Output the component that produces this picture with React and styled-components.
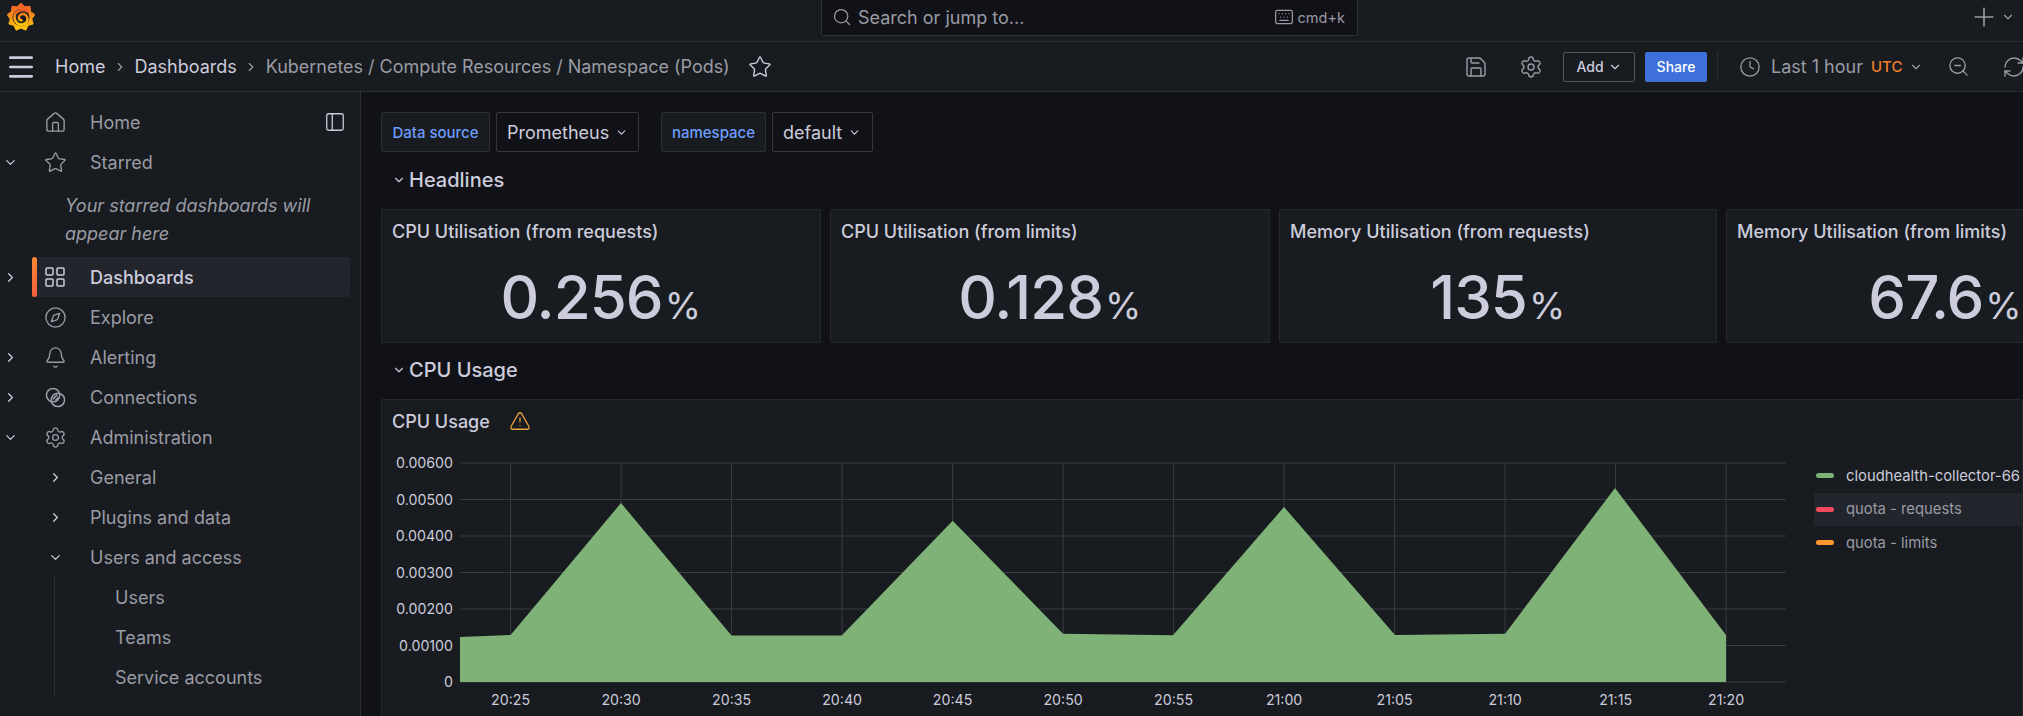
import React from 'react';
import styled, { createGlobalStyle } from 'styled-components';
import {
  Bell, ChevronDown, ChevronRight, Clock, Compass, House, Keyboard, LayoutGrid, Menu, PanelLeft,
  Plus, RefreshCw, Save, Search, Settings, Star, TriangleAlert, ZoomOut,
} from 'lucide-react';

const GlobalStyle = createGlobalStyle`
  html, body {
    margin: 0;
    height: 716px;
    overflow: hidden;
    background: #111217;
    color: #ccccdc;
    font-family: Inter, "Liberation Sans", sans-serif;
  }
  * { box-sizing: border-box; }
`;

const Page = styled.div`
  width: 2023px;
  height: 716px;
  display: flex;
  flex-direction: column;
  overflow: hidden;
`;

const TopBar = styled.header`
  height: 42px;
  flex: none;
  display: grid;
  grid-template-columns: 821px 537px 1fr;
  background: #181b1f;
  border-bottom: 1px solid #2c2e33;
`;

const LogoCell = styled.div`
  padding: 2px 0 0 7px;
`;

const SearchBox = styled.div`
  height: 38px;
  margin-top: -2px;
  display: flex;
  align-items: center;
  gap: 6px;
  padding: 0 12px 0 10px;
  background: #111217;
  border: 1px solid #2f3136;
  border-radius: 2px;
  color: #9a9ba5;
  font-size: 18px;
`;

const Shortcut = styled.span`
  margin-left: auto;
  display: flex;
  align-items: center;
  gap: 4px;
  font-size: 14.5px;
`;

const TopRight = styled.div`
  display: flex;
  align-items: center;
  justify-content: flex-end;
  gap: 2px;
  padding: 0 8px 7px 0;
  color: #9a9ba5;
`;

const NavBar = styled.div`
  height: 50px;
  flex: none;
  display: flex;
  align-items: center;
  padding-left: 5px;
  background: #181b1f;
  border-bottom: 1px solid #2c2e33;
`;

const Crumb = styled.span`
  font-size: 18px;
  white-space: nowrap;
  letter-spacing: ${(p) => (p.$muted ? '-0.03px' : '0')};
  color: ${(p) => (p.$muted ? '#9a9ba5' : '#ccccdc')};
`;

const CrumbSep = styled(ChevronRight)`
  margin: 0 7.5px;
  color: #9a9ba5;
  flex: none;
`;

const NavTools = styled.div`
  margin-left: auto;
  display: flex;
  align-items: center;
  color: #9a9ba5;
  width: 559px;
  flex: none;
  white-space: nowrap;
  svg { flex: none; }
`;

const ToolIcon = styled.span`
  display: flex;
  flex: none;
  margin-right: ${(p) => p.$gap}px;
`;

const Button = styled.div`
  height: 30px;
  display: flex;
  flex: none;
  align-items: center;
  justify-content: center;
  gap: 4px;
  width: ${(p) => p.$width}px;
  margin-right: ${(p) => p.$gap}px;
  font-size: 14px;
  font-weight: 500;
  border-radius: 2px;
  color: ${(p) => (p.$primary ? '#ffffff' : '#ccccdc')};
  background: ${(p) => (p.$primary ? '#3d71d9' : 'transparent')};
  border: ${(p) => (p.$primary ? 'none' : '1px solid #54565c')};
`;

const Divider = styled.span`
  width: 1px;
  height: 30px;
  flex: none;
  background: #2c2e33;
  margin-right: 21px;
`;

const TimeText = styled.span`
  font-size: 18px;
  margin: 0 8px 0 10px;
`;

const Utc = styled.span`
  font-size: 15px;
  font-weight: 500;
  color: #f0802a;
  margin-right: 7px;
`;

const Body = styled.div`
  flex: 1;
  min-height: 0;
  display: flex;
`;

const Sidebar = styled.nav`
  width: 361px;
  flex: none;
  background: #181b1f;
  border-right: 1px solid #2c2e33;
  padding-top: 10px;
  display: flex;
  flex-direction: column;
`;

const NavRow = styled.div`
  position: relative;
  height: 40px;
  flex: none;
  width: 350px;
  display: grid;
  grid-template-columns: 20px 70px 1fr;
  align-items: center;
  font-size: 18px;
  color: ${(p) => (p.$active ? '#ccccdc' : '#9a9ba5')};
  font-weight: ${(p) => (p.$active ? 500 : 400)};
  background: ${(p) => (p.$active ? 'linear-gradient(90deg, transparent 32px, #22252b 32px)' : 'transparent')};
  border-radius: 2px;
`;

const ActiveMark = styled.span`
  position: absolute;
  left: 32px;
  top: 0;
  width: 5px;
  height: 100%;
  border-radius: 3px;
  background: linear-gradient(0deg, #f55f3e, #ff8833);
`;

const Caret = styled.span`
  display: flex;
  justify-content: center;
  color: #ccccdc;
`;

const IconSlot = styled.span`
  display: flex;
  justify-content: center;
  color: #9a9ba5;
  width: 70px;
`;

const DockButton = styled.span`
  position: absolute;
  right: 4px;
  top: 9px;
  display: flex;
  color: #ccccdc;
`;

const EmptyNote = styled.div`
  height: 75px;
  flex: none;
  padding: 10px 0 0 65px;
  font-size: 18px;
  font-style: italic;
  line-height: 28px;
  color: #9a9ba5;
`;

const SubTree = styled.div`
  margin-left: 54px;
  border-left: 1px solid #2c2e33;
  height: 120px;
  flex: none;
`;

const SubRow = styled.div`
  height: 40px;
  display: flex;
  align-items: center;
  padding-left: 60px;
  font-size: 18px;
  color: #9a9ba5;
`;

const Main = styled.main`
  flex: 1;
  min-width: 0;
  padding: 20px 0 0 20px;
  overflow: hidden;
`;

const VarRow = styled.div`
  display: flex;
  height: 40px;
`;

const VarLabel = styled.div`
  height: 40px;
  display: flex;
  align-items: center;
  justify-content: center;
  width: ${(p) => p.$width}px;
  margin-right: 6px;
  background: #181b1f;
  border: 1px solid #2c2e33;
  border-radius: 2px;
  color: #6e9fff;
  font-size: 15px;
  font-weight: 500;
`;

const VarSelect = styled.div`
  height: 40px;
  display: flex;
  align-items: center;
  gap: 6px;
  width: ${(p) => p.$width}px;
  margin-right: ${(p) => p.$gap}px;
  padding-left: 10px;
  background: #111217;
  border: 1px solid #34363c;
  border-radius: 2px;
  font-size: 18px;
`;

const RowTitle = styled.div`
  height: ${(p) => p.$height}px;
  display: flex;
  align-items: center;
  padding: 0 0 2px 11px;
  gap: 3px;
  font-size: 20px;
  font-weight: 500;
`;

const StatGrid = styled.div`
  display: grid;
  grid-template-columns: 439.5px 439.5px 437.5px 438px;
  column-gap: 9.5px;
`;

const Panel = styled.section`
  position: relative;
  background: #181b1f;
  border: 1px solid #26282d;
  border-radius: 2px;
`;

const PanelTitle = styled.div`
  height: 42px;
  display: flex;
  align-items: center;
  gap: 19px;
  padding-left: 10px;
  font-size: 18px;
  font-weight: 500;
  white-space: nowrap;
`;

const StatValue = styled.div`
  height: 90px;
  display: flex;
  align-items: baseline;
  justify-content: center;
  gap: 2px;
  padding-top: 9px;
  font-size: 60px;
  font-weight: 500;
  letter-spacing: -1px;
  line-height: 72px;
`;

const StatUnit = styled.span`
  font-size: 37px;
  font-weight: 400;
  letter-spacing: 0;
`;

const ChartPanel = styled(Panel)`
  height: 330px;
`;

const ChartBody = styled.div`
  display: flex;
`;

const Legend = styled.div`
  position: absolute;
  left: 1432px;
  top: 59px;
  width: 300px;
  overflow: hidden;
`;

const LegendRow = styled.div`
  height: 33.5px;
  display: flex;
  align-items: center;
  gap: 12px;
  padding-left: 2px;
  font-size: 14.8px;
  white-space: nowrap;
  color: ${(p) => (p.$bright ? '#ccccdc' : '#9a9ba5')};
  background: ${(p) => (p.$hover ? '#22252b' : 'transparent')};
`;

const Swatch = styled.span`
  width: 18px;
  height: 5px;
  border-radius: 3px;
  flex: none;
  background: ${(p) => p.$color};
`;

// cog outline for the logo, teeth taken round the circle
const cogPoints = () => {
  const pts = [];
  const teeth = 9;
  for (let i = 0; i < teeth * 2; i++) {
    const r = i % 2 === 0 ? 14 : 11;
    const a = (Math.PI * i) / teeth - Math.PI / 2;
    pts.push(`${(14 + r * Math.cos(a)).toFixed(1)},${(15 + r * Math.sin(a)).toFixed(1)}`);
  }
  return pts.join(' ');
};

const GrafanaLogo = () => (
  <svg width="28" height="30" viewBox="0 0 28 30">
    <defs>
      <linearGradient id="gf" x1="0" y1="1" x2="0" y2="0">
        <stop offset="0" stopColor="#fbca0a" />
        <stop offset="1" stopColor="#f05a28" />
      </linearGradient>
    </defs>
    <polygon points={cogPoints()} fill="url(#gf)" stroke="url(#gf)" strokeWidth="1" strokeLinejoin="round" />
    <circle cx="14" cy="15.500" r="8.500" fill="#181b1f" />
    <path
      fill="none"
      stroke="url(#gf)"
      strokeWidth="2.600"
      d="M22 10C17 6 7 8 7.500 16 8 21 12 23 15 22.500 19 22 21 19.500 20.500 16.500 20 13 17.500 11.500 15 12 13 12.500 11.500 14.500 12 16.500 12.500 18 14 18.500 15.500 18"
    />
  </svg>
);

const ConnectionsIcon = () => (
  <svg width="21" height="21" viewBox="0 0 22 22" fill="none" stroke="currentColor" strokeWidth="1.600">
    <circle cx="8.500" cy="8.500" r="7" />
    <circle cx="13.500" cy="13.500" r="7" />
    <path d="M8 13l5-5M11 14l3-3" />
  </svg>
);

const series = [
  [0, 174], [50.600, 172], [161, 40], [271.500, 172.500], [381.700, 172.500], [492.700, 57.700],
  [603, 170.700], [713, 172.300], [824, 44], [935, 172], [1045, 170.700], [1155, 25], [1266, 172],
];
const yTicks = ['0.00600', '0.00500', '0.00400', '0.00300', '0.00200', '0.00100', '0'];
const xTicks = ['20:25', '20:30', '20:35', '20:40', '20:45', '20:50', '20:55', '21:00', '21:05', '21:10', '21:15', '21:20'];

const UsageChart = () => {
  const left = 78;
  const top = 21;
  const plotH = 219;
  const plotW = 1326;
  const area = series.map(([x, y]) => `${x + left},${y + top}`).join(' ');
  return (
    <svg width="1420" height="285" style={{ display: 'block' }}>
      {yTicks.map((t, i) => {
        const y = top + (plotH / 6) * i;
        return (
          <g key={t}>
            <line x1={left} x2={left + plotW} y1={y} y2={y} stroke="#3b3d42" />
            <text x={left - 7} y={y + 5} textAnchor="end" fontSize="14.200" fill="#ccccdc">{t}</text>
          </g>
        );
      })}
      {xTicks.map((t, i) => {
        const x = left + 50.600 + 110.500 * i;
        return (
          <g key={t}>
            <line x1={x} x2={x} y1={top} y2={top + plotH} stroke="#3b3d42" />
            <text x={x} y={top + plotH + 23} textAnchor="middle" fontSize="14.200" fill="#ccccdc">{t}</text>
          </g>
        );
      })}
      <polygon points={`${left},${top + plotH} ${area} ${left + 1266},${top + plotH}`} fill="#7eb276" />
    </svg>
  );
};

const stats = [
  { title: 'CPU Utilisation (from requests)', value: '0.256' },
  { title: 'CPU Utilisation (from limits)', value: '0.128' },
  { title: 'Memory Utilisation (from requests)', value: '135' },
  { title: 'Memory Utilisation (from limits)', value: '67.6' },
];

const chev = { size: 15, strokeWidth: 2 };
const tool = { size: 24, strokeWidth: 1.400 };
const nav = { size: 23, strokeWidth: 1.400 };

const Row = ({ caret, icon, children, active }) => (
  <NavRow $active={active}>
    {active && <ActiveMark />}
    <Caret>{caret === 'r' ? <ChevronRight {...chev} /> : caret === 'd' ? <ChevronDown {...chev} /> : null}</Caret>
    <IconSlot>{icon}</IconSlot>
    <span>{children}</span>
  </NavRow>
);

export default function App() {
  return (
    <Page>
      <GlobalStyle />
      <TopBar>
        <LogoCell><GrafanaLogo /></LogoCell>
        <SearchBox>
          <Search size={20} strokeWidth={1.500} />
          Search or jump to...
          <Shortcut><Keyboard size={20} strokeWidth={1.500} />cmd+k</Shortcut>
        </SearchBox>
        <TopRight>
          <Plus size={30} strokeWidth={1.300} />
          <ChevronDown size={14} />
        </TopRight>
      </TopBar>

      <NavBar>
        <Menu size={32} strokeWidth={2} color="#ccccdc" />
        <Crumb style={{ marginLeft: 18 }}>Home</Crumb>
        <CrumbSep size={14} />
        <Crumb>Dashboards</Crumb>
        <CrumbSep size={14} />
        <Crumb $muted>Kubernetes / Compute Resources / Namespace (Pods)</Crumb>
        <Star size={24} strokeWidth={1.400} color="#ccccdc" style={{ marginLeft: 18 }} />
        <NavTools>
          <ToolIcon $gap={31}><Save {...tool} /></ToolIcon>
          <ToolIcon $gap={20}><Settings {...tool} /></ToolIcon>
          <Button $width={72} $gap={10}>Add <ChevronDown size={14} /></Button>
          <Button $primary $width={62} $gap={10}>Share</Button>
          <Divider />
          <Clock size={22} strokeWidth={1.400} />
          <TimeText>Last 1 hour</TimeText>
          <Utc>UTC</Utc>
          <ChevronDown size={14} />
          <ToolIcon $gap={32} style={{ marginLeft: 24 }}><ZoomOut size={23} strokeWidth={1.400} /></ToolIcon>
          <RefreshCw {...tool} />
        </NavTools>
      </NavBar>

      <Body>
        <Sidebar>
          <NavRow>
            <Caret />
            <IconSlot><House {...nav} /></IconSlot>
            <span>Home</span>
            <DockButton><PanelLeft size={22} strokeWidth={1.400} /></DockButton>
          </NavRow>
          <Row caret="d" icon={<Star {...nav} />}>Starred</Row>
          <EmptyNote>Your starred dashboards will<br />appear here</EmptyNote>
          <Row caret="r" active icon={<LayoutGrid size={24} strokeWidth={1.500} color="#ccccdc" />}>Dashboards</Row>
          <Row icon={<Compass {...nav} />}>Explore</Row>
          <Row caret="r" icon={<Bell {...nav} />}>Alerting</Row>
          <Row caret="r" icon={<ConnectionsIcon />}>Connections</Row>
          <Row caret="d" icon={<Settings {...nav} />}>Administration</Row>
          <Row icon={<ChevronRight {...chev} color="#ccccdc" />}>General</Row>
          <Row icon={<ChevronRight {...chev} color="#ccccdc" />}>Plugins and data</Row>
          <Row icon={<ChevronDown {...chev} color="#ccccdc" />}>Users and access</Row>
          <SubTree>
            <SubRow>Users</SubRow>
            <SubRow>Teams</SubRow>
            <SubRow>Service accounts</SubRow>
          </SubTree>
        </Sidebar>

        <Main>
          <VarRow>
            <VarLabel $width={109}>Data source</VarLabel>
            <VarSelect $width={143} $gap={22}>Prometheus <ChevronDown size={13} /></VarSelect>
            <VarLabel $width={105}>namespace</VarLabel>
            <VarSelect $width={101} $gap={0}>default <ChevronDown size={13} /></VarSelect>
          </VarRow>

          <RowTitle $height={57}><ChevronDown size={14} />Headlines</RowTitle>
          <StatGrid>
            {stats.map((s) => (
              <Panel key={s.title}>
                <PanelTitle>{s.title}</PanelTitle>
                <StatValue>{s.value}<StatUnit>%</StatUnit></StatValue>
              </Panel>
            ))}
          </StatGrid>

          <RowTitle $height={56}><ChevronDown size={14} />CPU Usage</RowTitle>
          <ChartPanel>
            <PanelTitle>
              CPU Usage
              <TriangleAlert size={22} strokeWidth={1.400} color="#e8a33d" />
            </PanelTitle>
            <ChartBody><UsageChart /></ChartBody>
            <Legend>
              <LegendRow $bright><Swatch $color="#7eb276" />cloudhealth-collector-66</LegendRow>
              <LegendRow $hover><Swatch $color="#f2495c" />quota - requests</LegendRow>
              <LegendRow><Swatch $color="#ff9830" />quota - limits</LegendRow>
            </Legend>
          </ChartPanel>
        </Main>
      </Body>
    </Page>
  );
}
